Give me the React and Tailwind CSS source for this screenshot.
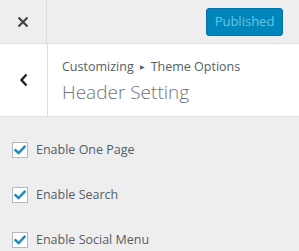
import React from "react";

function Check() {
  return (
    <span className="w-[16px] h-[16px] bg-white border border-[#b4b9be] flex items-center justify-center shrink-0">
      <svg width="12" height="10" viewBox="0 0 12 10">
        <path d="M1.5 5.2 L4.6 8 L10.5 1.8" fill="none" stroke="#1e8cbe" strokeWidth="2.4" strokeLinecap="square" />
      </svg>
    </span>
  );
}

export default function App() {
  const items = ["Enable One Page", "Enable Search", "Enable Social Menu"];
  return (
    <div className="w-[299px] h-[251px] bg-[#eeeeee] overflow-hidden" style={{ fontFamily: '"Open Sans", "Noto Sans", sans-serif' }}>
      <div className="h-[44px] flex border-b border-[#dddddd] bg-[#eeeeee]">
        <div className="w-[47px] border-r border-[#dddddd] flex items-center justify-center">
          <svg width="12" height="12" viewBox="0 0 12 12">
            <path d="M1.5 1.5 L10.5 10.5 M10.5 1.5 L1.5 10.5" stroke="#444" strokeWidth="2.2" />
          </svg>
        </div>
        <div className="flex-1 flex items-start justify-end pr-[16px] pt-[8px]">
          <div className="w-[77px] h-[28px] rounded-[3px] bg-[#0085ba] border border-[#0073aa] flex items-center justify-center text-[13px] text-[#66c6e4]">
            Published
          </div>
        </div>
      </div>
      <div className="h-[73px] flex bg-white border-b border-[#dddddd]">
        <div className="w-[48px] border-r border-[#dddddd] flex items-center justify-center">
          <svg width="10" height="14" viewBox="0 0 10 14">
            <path d="M7.5 1.5 L2.5 7 L7.5 12.5" fill="none" stroke="#222" strokeWidth="2.4" />
          </svg>
        </div>
        <div className="flex-1 pl-[14px] pt-[14px] flex flex-col">
          <div className="text-[12.5px] leading-[18px] text-[#555d66] flex items-center">
            Customizing
            <span className="text-[6px] mx-[6px]">▶</span>
            Theme Options
          </div>
          <div className="text-[19px] leading-[26px] font-light text-[#6f757a] mt-[3px]">Header Setting</div>
        </div>
      </div>
      <div className="flex flex-col pt-[25px] pl-[12px]">
        {items.map((t) => (
          <div key={t} className="h-[45px] flex items-start gap-[8px]">
            <Check />
            <span className="text-[12.5px] leading-[16px] text-[#555d66]">{t}</span>
          </div>
        ))}
      </div>
    </div>
  );
}
